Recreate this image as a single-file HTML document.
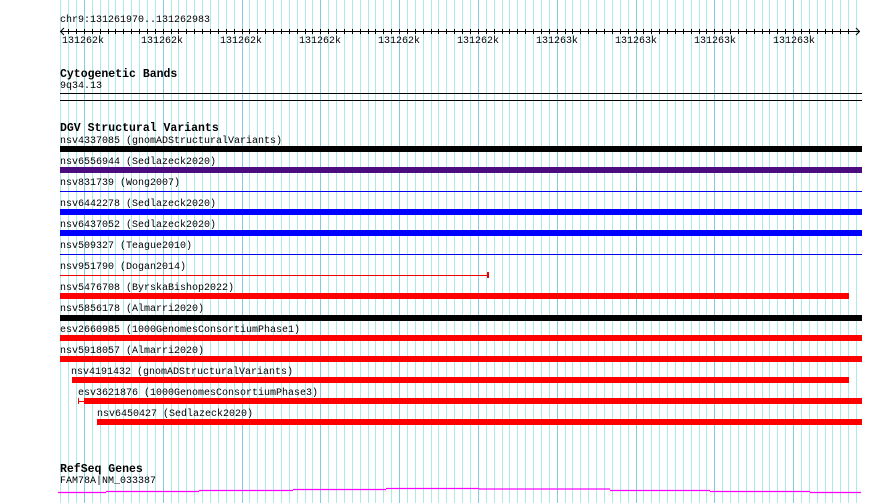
<!DOCTYPE html>
<html><head><meta charset="utf-8"><style>
html,body{margin:0;padding:0;width:890px;height:503px;overflow:hidden;background:#fff;}
.t{position:absolute;font-family:"Liberation Mono",monospace;font-size:10px;line-height:12px;color:#000;white-space:pre;}
.h{position:absolute;font-family:"Liberation Mono",monospace;font-size:11.5px;font-weight:bold;line-height:13px;color:#000;white-space:pre;}
.b{position:absolute;height:6px;}
.l{position:absolute;height:1px;}
</style></head><body>
<svg style="position:absolute;left:0;top:0" width="890" height="503">
<path stroke="#aee9ea" stroke-width="1" d="M60.5 0V503M68.5 0V503M76.5 0V503M92.5 0V503M100.5 0V503M108.5 0V503M115.5 0V503M123.5 0V503M131.5 0V503M139.5 0V503M147.5 0V503M155.5 0V503M171.5 0V503M178.5 0V503M186.5 0V503M194.5 0V503M202.5 0V503M210.5 0V503M218.5 0V503M226.5 0V503M234.5 0V503M249.5 0V503M257.5 0V503M265.5 0V503M273.5 0V503M281.5 0V503M289.5 0V503M297.5 0V503M305.5 0V503M312.5 0V503M328.5 0V503M336.5 0V503M344.5 0V503M352.5 0V503M360.5 0V503M368.5 0V503M375.5 0V503M383.5 0V503M391.5 0V503M407.5 0V503M415.5 0V503M423.5 0V503M431.5 0V503M438.5 0V503M446.5 0V503M454.5 0V503M462.5 0V503M470.5 0V503M486.5 0V503M494.5 0V503M502.5 0V503M509.5 0V503M517.5 0V503M525.5 0V503M533.5 0V503M541.5 0V503M549.5 0V503M565.5 0V503M572.5 0V503M580.5 0V503M588.5 0V503M596.5 0V503M604.5 0V503M612.5 0V503M620.5 0V503M628.5 0V503M643.5 0V503M651.5 0V503M659.5 0V503M667.5 0V503M675.5 0V503M683.5 0V503M691.5 0V503M699.5 0V503M706.5 0V503M722.5 0V503M730.5 0V503M738.5 0V503M746.5 0V503M754.5 0V503M762.5 0V503M769.5 0V503M777.5 0V503M785.5 0V503M801.5 0V503M809.5 0V503M817.5 0V503M825.5 0V503M832.5 0V503M840.5 0V503M848.5 0V503M856.5 0V503"/>
<path stroke="#86cbe6" stroke-width="1" d="M84.5 0V503M163.5 0V503M242.5 0V503M320.5 0V503M399.5 0V503M478.5 0V503M557.5 0V503M636.5 0V503M714.5 0V503M793.5 0V503"/>
<line x1="60" y1="31.5" x2="860" y2="31.5" stroke="#000"/>
<polyline points="64,28 60.5,31.5 64,35" fill="none" stroke="#000"/>
<polyline points="856,28 859.5,31.5 856,35" fill="none" stroke="#000"/>
<path stroke="#000" d="M68.5 29v5M76.5 29v5M84.5 29v5M92.5 29v5M100.5 29v5M108.5 29v5M115.5 29v5M123.5 29v5M131.5 29v5M139.5 29v5M147.5 29v5M155.5 29v5M163.5 29v5M171.5 29v5M178.5 29v5M186.5 29v5M194.5 29v5M202.5 29v5M210.5 29v5M218.5 29v5M226.5 29v5M234.5 29v5M242.5 29v5M249.5 29v5M257.5 29v5M265.5 29v5M273.5 29v5M281.5 29v5M289.5 29v5M297.5 29v5M305.5 29v5M312.5 29v5M320.5 29v5M328.5 29v5M336.5 29v5M344.5 29v5M352.5 29v5M360.5 29v5M368.5 29v5M375.5 29v5M383.5 29v5M391.5 29v5M399.5 29v5M407.5 29v5M415.5 29v5M423.5 29v5M431.5 29v5M438.5 29v5M446.5 29v5M454.5 29v5M462.5 29v5M470.5 29v5M478.5 29v5M486.5 29v5M494.5 29v5M502.5 29v5M509.5 29v5M517.5 29v5M525.5 29v5M533.5 29v5M541.5 29v5M549.5 29v5M557.5 29v5M565.5 29v5M572.5 29v5M580.5 29v5M588.5 29v5M596.5 29v5M604.5 29v5M612.5 29v5M620.5 29v5M628.5 29v5M636.5 29v5M643.5 29v5M651.5 29v5M659.5 29v5M667.5 29v5M675.5 29v5M683.5 29v5M691.5 29v5M699.5 29v5M706.5 29v5M714.5 29v5M722.5 29v5M730.5 29v5M738.5 29v5M746.5 29v5M754.5 29v5M762.5 29v5M769.5 29v5M777.5 29v5M785.5 29v5M793.5 29v5M801.5 29v5M809.5 29v5M817.5 29v5M825.5 29v5M832.5 29v5M840.5 29v5M848.5 29v5"/>
<path d="M58 492.5H106M106 491.5H199M199 490.5H293M293 489.5H386M386 488.5H479M479 489H610M610 490.5H710M710 491.5H810M810 492.5H861" stroke="#f0f" stroke-width="1.3" fill="none"/>
</svg>
<div class="t" style="left:60px;top:15px">chr9:131261970..131262983</div>
<div class="t" style="left:62px;top:36px">131262k</div>
<div class="t" style="left:141px;top:36px">131262k</div>
<div class="t" style="left:220px;top:36px">131262k</div>
<div class="t" style="left:299px;top:36px">131262k</div>
<div class="t" style="left:378px;top:36px">131262k</div>
<div class="t" style="left:457px;top:36px">131262k</div>
<div class="t" style="left:536px;top:36px">131263k</div>
<div class="t" style="left:615px;top:36px">131263k</div>
<div class="t" style="left:694px;top:36px">131263k</div>
<div class="t" style="left:773px;top:36px">131263k</div>

<div class="h" style="left:60px;top:68px">Cytogenetic Bands</div>
<div class="t" style="left:60px;top:81px">9q34.13</div>
<div class="l" style="left:60px;top:93px;width:802px;background:#000"></div>
<div class="l" style="left:60px;top:100px;width:802px;background:#000"></div>

<div class="h" style="left:60px;top:122px">DGV Structural Variants</div>
<div class="t" style="left:60px;top:136px">nsv4337085 (gnomADStructuralVariants)</div>
<div class="b" style="left:60px;top:146px;width:802px;background:#000"></div>
<div class="t" style="left:60px;top:157px">nsv6556944 (Sedlazeck2020)</div>
<div class="b" style="left:60px;top:167px;width:802px;background:#4b0c80"></div>
<div class="t" style="left:60px;top:178px">nsv831739 (Wong2007)</div>
<div class="l" style="left:60px;top:191px;width:802px;background:#0000ee"></div>
<div class="t" style="left:60px;top:199px">nsv6442278 (Sedlazeck2020)</div>
<div class="b" style="left:60px;top:209px;width:802px;background:#0000ff"></div>
<div class="t" style="left:60px;top:220px">nsv6437052 (Sedlazeck2020)</div>
<div class="b" style="left:60px;top:230px;width:802px;background:#0000ff"></div>
<div class="t" style="left:60px;top:241px">nsv509327 (Teague2010)</div>
<div class="l" style="left:60px;top:254px;width:802px;background:#0000ee"></div>
<div class="t" style="left:60px;top:262px">nsv951790 (Dogan2014)</div>
<div class="l" style="left:60px;top:275px;width:429px;background:#e00"></div>
<div style="position:absolute;left:487px;top:272px;width:2px;height:6px;background:#e00"></div>
<div class="t" style="left:60px;top:283px">nsv5476708 (ByrskaBishop2022)</div>
<div class="b" style="left:60px;top:293px;width:789px;background:#f00"></div>
<div class="t" style="left:60px;top:304px">nsv5856178 (Almarri2020)</div>
<div class="b" style="left:60px;top:315px;width:802px;background:#000"></div>
<div class="t" style="left:60px;top:325px">esv2660985 (1000GenomesConsortiumPhase1)</div>
<div class="b" style="left:60px;top:335px;width:802px;background:#f00"></div>
<div class="t" style="left:60px;top:346px">nsv5918057 (Almarri2020)</div>
<div class="b" style="left:60px;top:356px;width:802px;background:#f00"></div>
<div class="t" style="left:71px;top:367px">nsv4191432 (gnomADStructuralVariants)</div>
<div class="b" style="left:72px;top:377px;width:777px;background:#f00"></div>
<div class="t" style="left:78px;top:388px">esv3621876 (1000GenomesConsortiumPhase3)</div>
<div class="l" style="left:78px;top:401px;width:6px;background:#f00"></div>
<div style="position:absolute;left:78px;top:398px;width:1px;height:6px;background:#f00"></div>
<div class="b" style="left:84px;top:398px;width:778px;background:#f00"></div>
<div class="t" style="left:97px;top:409px">nsv6450427 (Sedlazeck2020)</div>
<div class="b" style="left:97px;top:419px;width:765px;background:#f00"></div>

<div class="h" style="left:60px;top:463px">RefSeq Genes</div>
<div class="t" style="left:60px;top:476px">FAM78A|NM_033387</div>
</body></html>
